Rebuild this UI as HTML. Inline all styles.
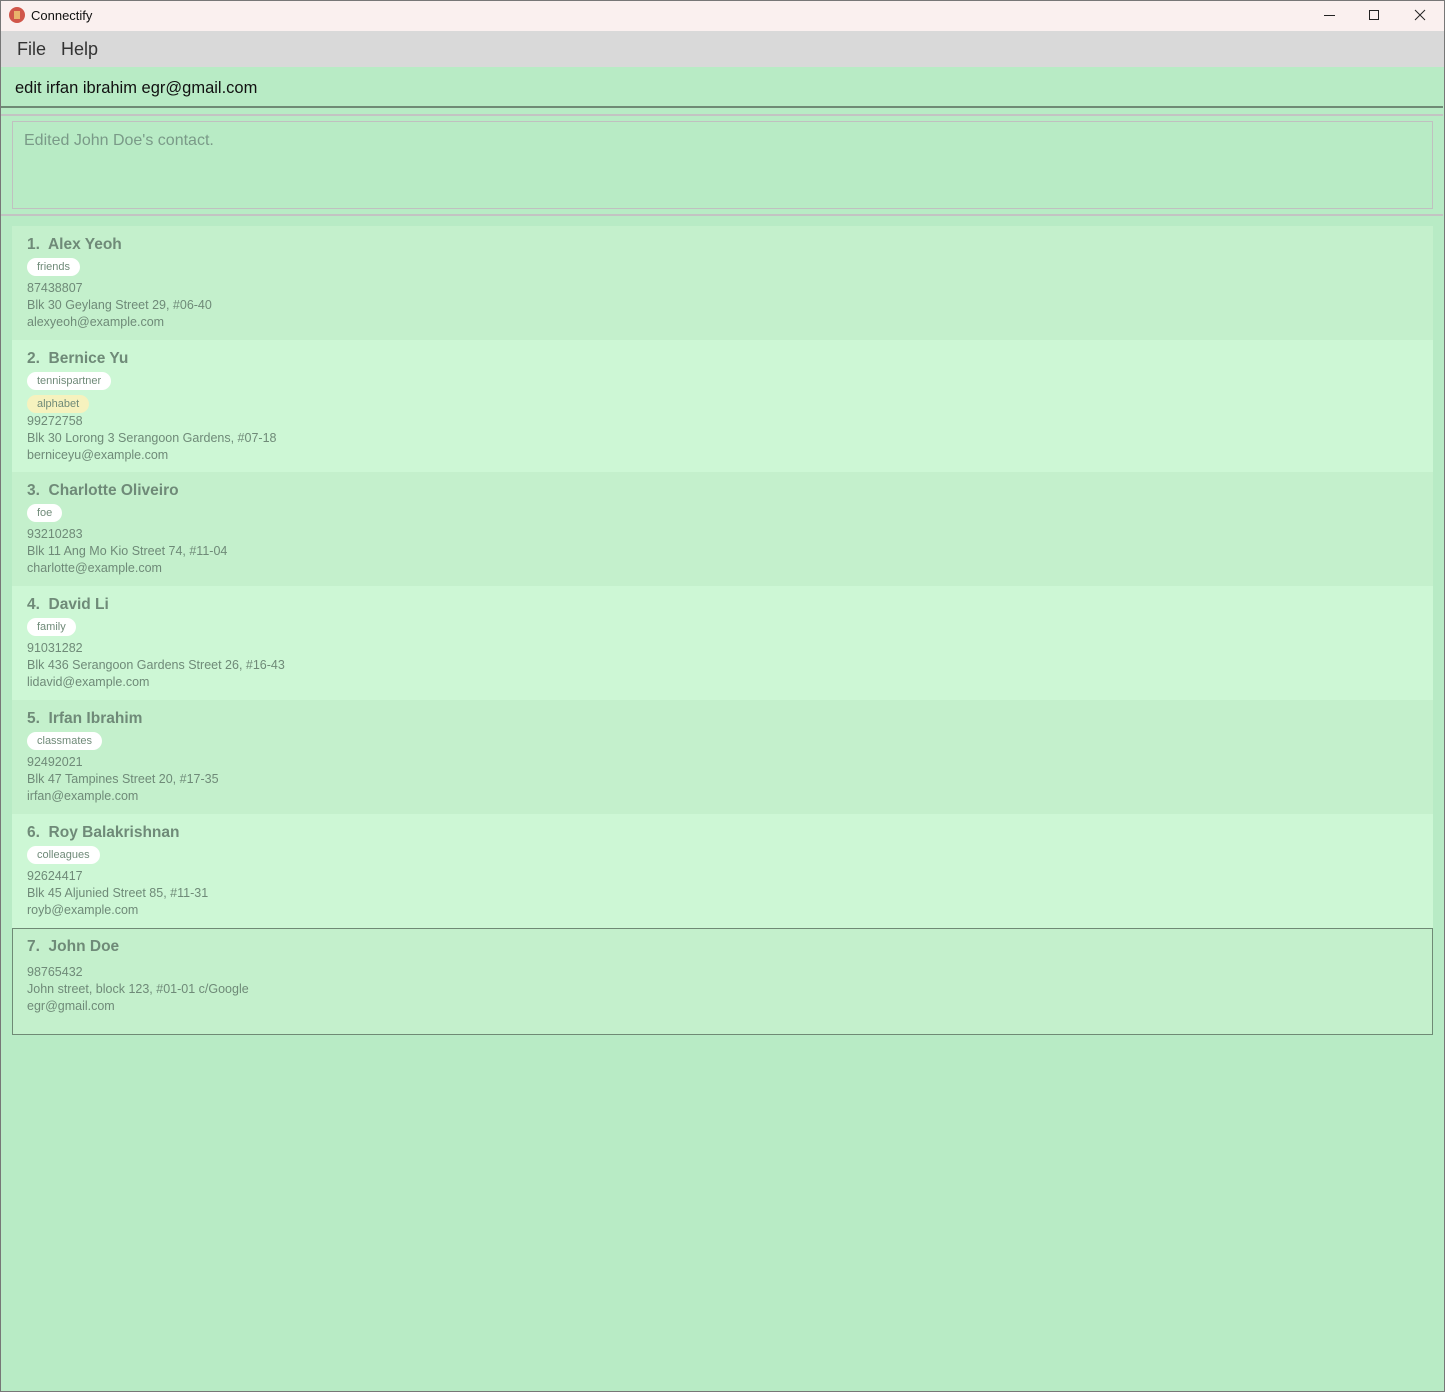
<!DOCTYPE html>
<html><head><meta charset="utf-8"><style>
*{margin:0;padding:0;box-sizing:border-box}
body{width:1445px;height:1392px;background:#b8ebc5;font-family:"Liberation Sans",sans-serif;position:relative;overflow:hidden}
.frame{position:absolute;left:0;top:0;width:1445px;height:1392px;border:1px solid #777;z-index:9;pointer-events:none}
.tb{position:absolute;left:0;top:0;width:1445px;height:31px;background:#faf0ef}
.menu{position:absolute;left:0;top:31px;width:1445px;height:36px;background:#d9d9d9;font-size:18px;color:#333}
.cmd{position:absolute;left:1px;top:67px;width:1442px;height:41px;border-bottom:2px solid #6f8a75;font-size:16.5px;color:#111;padding:12px 14px}
.res{position:absolute;left:12px;top:121px;width:1421px;height:88px;border:1px solid #c0c0c0;color:#7a9a88;font-size:16px;padding:10px 11px}
.line{position:absolute;left:1px;width:1442px;height:2px;background:#c3c3c3}
.card{position:absolute;left:12px;width:1421px;color:#6f8a78;padding:10px 15px}
.card h{display:block;font-size:15.5px;font-weight:bold;height:21px}
.card .t{display:inline-block;background:#fff;border-radius:9px;font-size:11px;padding:2px 10px;height:18px;line-height:14px;margin-top:0;margin-bottom:4px}
.card p{font-size:12.5px;line-height:17px}
</style></head><body>
<div class="frame"></div>
<div class="tb">
<svg style="position:absolute;left:9px;top:7px" width="16" height="16"><circle cx="8" cy="8" r="8" fill="#d0564a"/><rect x="5" y="4" width="6" height="8" fill="#e9b36b"/></svg>
<span style="position:absolute;left:31px;top:8px;font-size:13px;color:#111">Connectify</span>
<svg style="position:absolute;left:1319px;top:8px" width="110" height="14" stroke="#222" fill="none" stroke-width="1"><path d="M5 7.5h11"/><rect x="50.5" y="2.5" width="9" height="9"/><path d="M96 2l10 10M106 2l-10 10"/></svg>
</div>
<div class="menu"><span style="position:absolute;left:17px;top:8px">File</span><span style="position:absolute;left:61px;top:8px">Help</span></div>
<div class="cmd">edit irfan ibrahim egr@gmail.com</div>
<div class="line" style="top:114px"></div>
<div class="res">Edited John Doe's contact.</div>
<div class="line" style="top:214px"></div>

<div class="card" style="top:226px;height:114px;background:#c4f0cc"><h>1.&nbsp; Alex Yeoh</h><span class="t">friends</span><p>87438807<br>Blk 30 Geylang Street 29, #06-40<br>alexyeoh@example.com</p></div>
<div class="card" style="top:340px;height:132px;background:#cdf7d5"><h>2.&nbsp; Bernice Yu</h><span class="t">tennispartner</span><br><span class="t" style="background:#f6f2be;margin-bottom:0">alphabet</span><p>99272758<br>Blk 30 Lorong 3 Serangoon Gardens, #07-18<br>berniceyu@example.com</p></div>
<div class="card" style="top:472px;height:114px;background:#c4f0cc"><h>3.&nbsp; Charlotte Oliveiro</h><span class="t">foe</span><p>93210283<br>Blk 11 Ang Mo Kio Street 74, #11-04<br>charlotte@example.com</p></div>
<div class="card" style="top:586px;height:114px;background:#cdf7d5"><h>4.&nbsp; David Li</h><span class="t">family</span><p>91031282<br>Blk 436 Serangoon Gardens Street 26, #16-43<br>lidavid@example.com</p></div>
<div class="card" style="top:700px;height:114px;background:#c4f0cc"><h>5.&nbsp; Irfan Ibrahim</h><span class="t">classmates</span><p>92492021<br>Blk 47 Tampines Street 20, #17-35<br>irfan@example.com</p></div>
<div class="card" style="top:814px;height:114px;background:#cdf7d5"><h>6.&nbsp; Roy Balakrishnan</h><span class="t">colleagues</span><p>92624417<br>Blk 45 Aljunied Street 85, #11-31<br>royb@example.com</p></div>
<div class="card" style="top:928px;height:107px;background:#c4f0cc;border:1px solid #6f8a75;padding-left:14px;padding-top:9px"><h style="height:26px">7.&nbsp; John Doe</h><p>98765432<br>John street, block 123, #01-01 c/Google<br>egr@gmail.com</p></div>
</body></html>
